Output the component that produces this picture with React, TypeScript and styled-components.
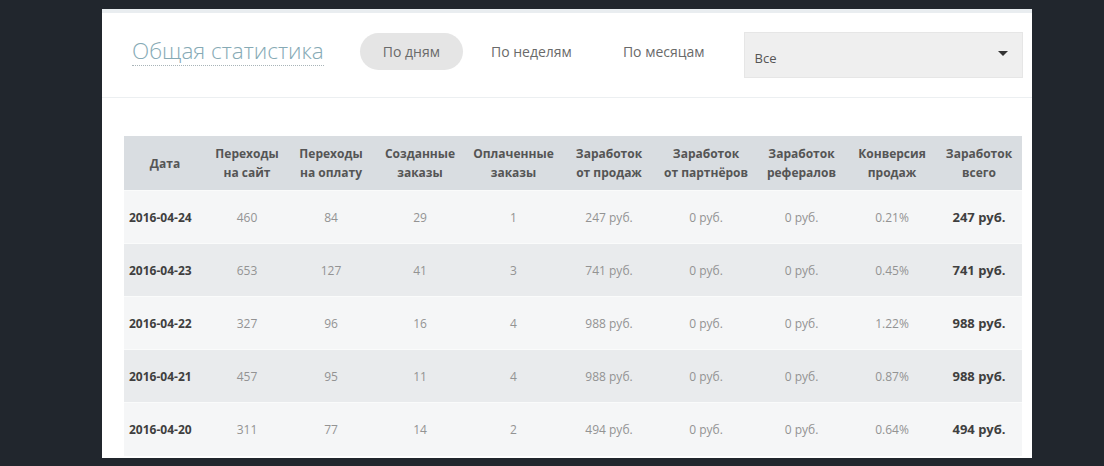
import React from "react";
import styled, { createGlobalStyle } from "styled-components";

const GlobalStyle = createGlobalStyle`
  html, body {
    margin: 0;
    padding: 0;
    background: #21262d;
  }
  body {
    font-family: "Open Sans", "Noto Sans", "Liberation Sans", sans-serif;
    padding-top: 9px;
  }
`;

const Panel = styled.div`
  margin-left: 102px;
  width: 930px;
  height: 449px;
  box-sizing: border-box;
  background: #fff;
  border-top: 4px solid #e9edf0;
  overflow: hidden;
`;

const Header = styled.div`
  display: flex;
  align-items: flex-start;
  height: 85px;
  box-sizing: border-box;
  padding: 19px 0 0 30px;
  border-bottom: 1px solid #eceff1;
  white-space: nowrap;
  & > * {
    flex-shrink: 0;
  }
`;

const Title = styled.span`
  margin-top: 5px;
  font-size: 22.5px;
  font-weight: 300;
  line-height: 28px;
  color: #86aab5;
  border-bottom: 1px dotted #a8b4b8;
  margin-right: 36px;
`;

const Tabs = styled.div`
  display: flex;
  gap: 5px;
  margin-top: 1px;
  margin-right: 16px;
`;

const Tab = styled.div<{ $active?: boolean }>`
  height: 37px;
  padding: 0 23px;
  display: flex;
  align-items: center;
  border-radius: 19px;
  font-size: 14px;
  color: #6a6a6a;
  background: ${(p) => (p.$active ? "#e5e5e5" : "transparent")};
  cursor: pointer;
`;

const Select = styled.div`
  width: 279px;
  height: 46px;
  box-sizing: border-box;
  display: flex;
  align-items: center;
  justify-content: space-between;
  padding: 5px 14px 0 10px;
  background: #efefef;
  border: 1px solid #e6e6e6;
  font-size: 13px;
  color: #555;
`;

const Caret = styled.span`
  width: 0;
  height: 0;
  margin-top: -8px;
  border-left: 5px solid transparent;
  border-right: 5px solid transparent;
  border-top: 5px solid #333;
`;

const Table = styled.table`
  margin: 38px 0 0 22px;
  width: 898px;
  table-layout: fixed;
  border-collapse: collapse;
  font-size: 12px;
`;

const HeadCell = styled.th`
  height: 54px;
  padding: 0;
  background: #d9dde1;
  color: #555;
  font-weight: 700;
  line-height: 19px;
  text-align: center;
  vertical-align: middle;
`;

const Row = styled.tr<{ $shade: boolean }>`
  height: 53px;
  background: ${(p) => (p.$shade ? "#e9ebed" : "#f5f6f7")};
  border-top: 1px solid #fafbfb;
`;

const Cell = styled.td<{ $bold?: boolean; $left?: boolean; $big?: boolean }>`
  padding: ${(p) => (p.$left ? "0 0 0 5px" : "0")};
  text-align: ${(p) => (p.$left ? "left" : "center")};
  color: ${(p) => (p.$bold ? "#3f3f3f" : "#939393")};
  font-weight: ${(p) => (p.$bold ? 700 : 400)};
  font-size: ${(p) => (p.$big ? "13px" : "12px")};
  vertical-align: middle;
`;

const widths = [82, 82, 86, 92, 95, 96, 98, 93, 88, 86];

const headers: [string, string?][] = [
  ["Дата"],
  ["Переходы", "на сайт"],
  ["Переходы", "на оплату"],
  ["Созданные", "заказы"],
  ["Оплаченные", "заказы"],
  ["Заработок", "от продаж"],
  ["Заработок", "от партнёров"],
  ["Заработок", "рефералов"],
  ["Конверсия", "продаж"],
  ["Заработок", "всего"],
];

const rows = [
  ["2016-04-24", "460", "84", "29", "1", "247 руб.", "0 руб.", "0 руб.", "0.21%", "247 руб."],
  ["2016-04-23", "653", "127", "41", "3", "741 руб.", "0 руб.", "0 руб.", "0.45%", "741 руб."],
  ["2016-04-22", "327", "96", "16", "4", "988 руб.", "0 руб.", "0 руб.", "1.22%", "988 руб."],
  ["2016-04-21", "457", "95", "11", "4", "988 руб.", "0 руб.", "0 руб.", "0.87%", "988 руб."],
  ["2016-04-20", "311", "77", "14", "2", "494 руб.", "0 руб.", "0 руб.", "0.64%", "494 руб."],
];

const App: React.FC = () => {
  return (
    <>
      <GlobalStyle />
      <Panel>
        <Header>
          <Title>Общая статистика</Title>
          <Tabs>
            <Tab $active>По дням</Tab>
            <Tab>По неделям</Tab>
            <Tab>По месяцам</Tab>
          </Tabs>
          <Select>
            <span>Все</span>
            <Caret />
          </Select>
        </Header>
        <Table>
          <colgroup>
            {widths.map((w, i) => (
              <col key={i} style={{ width: w }} />
            ))}
          </colgroup>
          <thead>
            <tr>
              {headers.map(([a, b], i) => (
                <HeadCell key={i}>
                  {a}
                  {b && <br />}
                  {b}
                </HeadCell>
              ))}
            </tr>
          </thead>
          <tbody>
            {rows.map((r, i) => (
              <Row key={r[0]} $shade={i % 2 === 1}>
                {r.map((v, j) => (
                  <Cell
                    key={j}
                    $bold={j === 0 || j === 9}
                    $left={j === 0}
                    $big={j === 9}
                  >
                    {v}
                  </Cell>
                ))}
              </Row>
            ))}
          </tbody>
        </Table>
      </Panel>
    </>
  );
};

export default App;
